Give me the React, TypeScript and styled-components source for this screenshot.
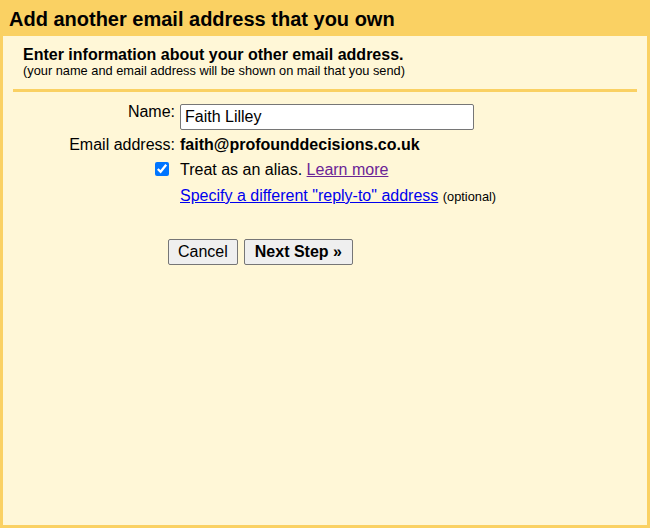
import React from "react";
import styled, { createGlobalStyle } from "styled-components";

const GlobalStyle = createGlobalStyle`
  html, body {
    margin: 0;
    padding: 0;
  }
  body {
    font-family: "Liberation Sans", Arial, sans-serif;
    color: #000;
  }
  * {
    box-sizing: border-box;
  }
`;

const Page = styled.div`
  display: flex;
  flex-direction: column;
  height: 100vh;
  background: #fad163;
`;

const Header = styled.h1`
  margin: 0;
  padding: 8px 9px 5px;
  font-size: 20px;
  line-height: 23px;
  font-weight: bold;
  color: #000;
`;

const Panel = styled.div`
  flex: 1;
  margin: 0 3px 3px;
  padding: 10px 10px 0;
  background: #fff7d7;
`;

const Intro = styled.div`
  padding-left: 10px;
`;

const IntroTitle = styled.div`
  font-size: 16px;
  line-height: 17px;
  font-weight: bold;
`;

const IntroNote = styled.div`
  margin-top: 1px;
  font-size: 12.8px;
  line-height: 14px;
`;

const Divider = styled.div`
  margin-top: 11px;
  height: 3px;
  background: #fad163;
`;

const Row = styled.div<{ $gap: number }>`
  display: flex;
  align-items: flex-start;
  margin-top: ${(p) => p.$gap}px;
  font-size: 16px;
`;

const Label = styled.div<{ $pad?: number }>`
  flex: 0 0 162px;
  margin-right: 5px;
  padding-top: ${(p) => p.$pad ?? 0}px;
  text-align: right;
  display: flex;
  justify-content: flex-end;
`;

const Field = styled.div<{ $pad?: number }>`
  padding-top: ${(p) => p.$pad ?? 0}px;
`;

const TextInput = styled.input`
  display: block;
  margin-top: 2px;
  width: 294px;
  height: 26px;
  padding: 1px 4px;
  border: 1px solid #767676;
  border-radius: 2px;
  background: #fff;
  font-family: "Liberation Sans", Arial, sans-serif;
  font-size: 16px;
  color: #000;
  outline: none;
`;

const Strong = styled.span`
  font-weight: bold;
`;

const Check = styled.input`
  width: 14px;
  height: 14px;
  margin: 1px 6px 0 0;
`;

const Link = styled.a<{ $visited?: boolean }>`
  color: ${(p) => (p.$visited ? "#6b2496" : "#0000ee")};
  text-decoration: underline;
  cursor: pointer;
`;

const Small = styled.span`
  font-size: 12.8px;
`;

const Buttons = styled.div`
  display: flex;
  gap: 6px;
  margin: 34px 0 0 155px;
`;

const Button = styled.button<{ $primary?: boolean }>`
  height: 26px;
  padding: 0 ${(p) => (p.$primary ? 10 : 9)}px;
  border: 1px solid #767676;
  border-radius: 2px;
  background: #efefef;
  font-family: "Liberation Sans", Arial, sans-serif;
  font-size: 16px;
  font-weight: ${(p) => (p.$primary ? "bold" : "normal")};
  color: #000;
  cursor: pointer;
`;

export default function App() {
  return (
    <>
      <GlobalStyle />
      <Page>
        <Header>Add another email address that you own</Header>
        <Panel>
          <Intro>
            <IntroTitle>Enter information about your other email address.</IntroTitle>
            <IntroNote>
              (your name and email address will be shown on mail that you send)
            </IntroNote>
          </Intro>
          <Divider />
          <Row $gap={10}>
            <Label $pad={1}>Name:</Label>
            <Field>
              <TextInput type="text" defaultValue="Faith Lilley" />
            </Field>
          </Row>
          <Row $gap={6}>
            <Label>Email address:</Label>
            <Field>
              <Strong>faith@profounddecisions.co.uk</Strong>
            </Field>
          </Row>
          <Row $gap={7}>
            <Label>
              <Check type="checkbox" defaultChecked />
            </Label>
            <Field>
              Treat as an alias. <Link $visited>Learn more</Link>
            </Field>
          </Row>
          <Row $gap={8}>
            <Label />
            <Field>
              <Link>Specify a different "reply-to" address</Link> <Small>(optional)</Small>
            </Field>
          </Row>
          <Buttons>
            <Button type="button">Cancel</Button>
            <Button type="button" $primary>
              Next Step »
            </Button>
          </Buttons>
        </Panel>
      </Page>
    </>
  );
}
